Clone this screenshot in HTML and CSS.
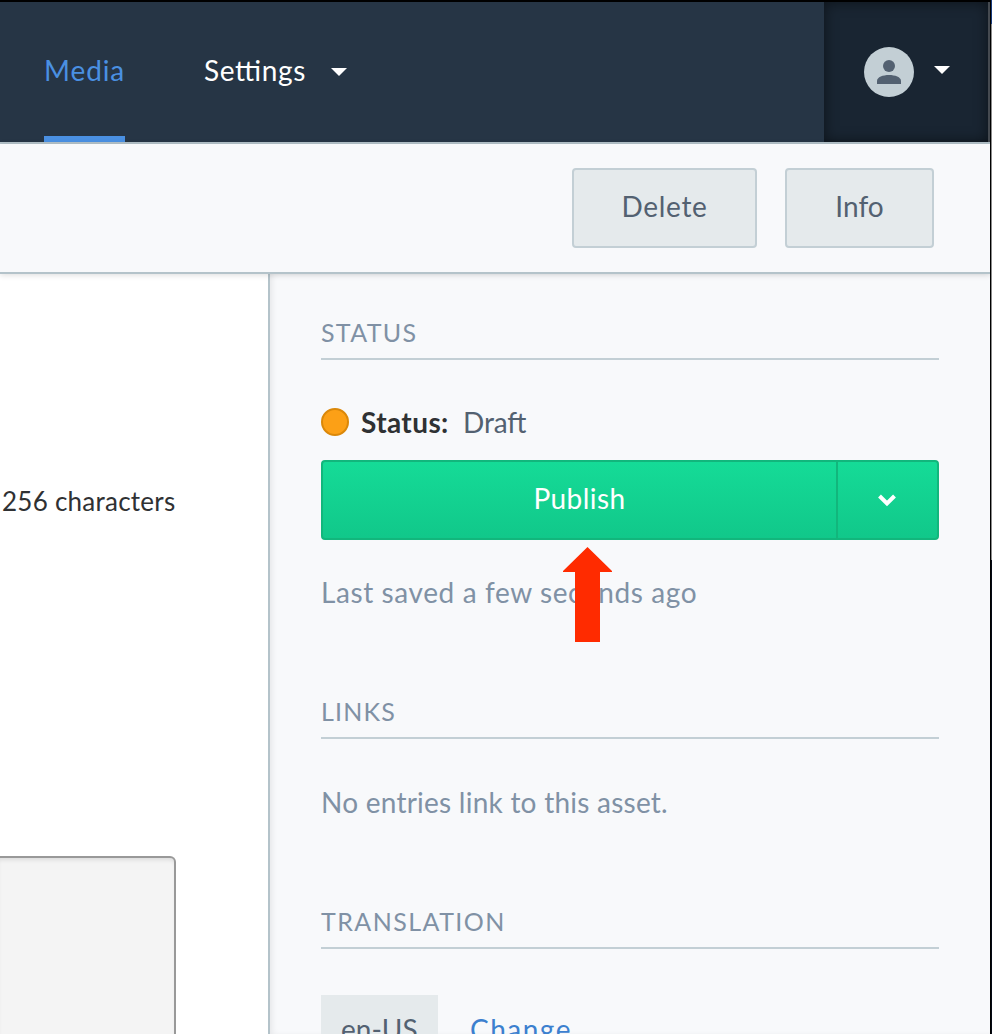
FILE: index.html
```html
<!DOCTYPE html>
<html lang="en">
<head>
<meta charset="utf-8">
<title>Media</title>
<link rel="stylesheet" href="styles.css">
</head>
<body>
<div class="window">
  <div class="app">
    <header class="nav">
      <nav class="tabs">
        <a class="tab active"><span class="t-media">Media</span></a>
        <a class="tab"><span class="t-settings">Settings</span><svg class="caret" width="16" height="8" viewBox="0 0 16 8"><path d="M0 0H16L8 8Z" fill="#fff"/></svg></a>
      </nav>
      <div class="account">
        <svg class="avatar" width="50" height="50" viewBox="0 0 50 50"><circle cx="25" cy="25" r="25" fill="#c3cfd5"/><circle cx="25" cy="19" r="6" fill="#536171"/><path d="M13 37V34C13 30 19 28 25 28S37 30 37 34V37Z" fill="#536171"/></svg>
        <svg class="caret" width="16" height="8" viewBox="0 0 16 8"><path d="M0 0H16L8 8Z" fill="#fff"/></svg>
      </div>
    </header>
    <div class="toolbar">
      <button class="btn delete"><span class="t-delete">Delete</span></button>
      <button class="btn info"><span class="t-info">Info</span></button>
    </div>
    <main class="body">
      <section class="editor">
        <p class="hint"><span class="t-hint">256 characters</span></p>
        <div class="field"></div>
      </section>
      <aside class="sidebar">
        <h2 class="heading"><span class="t-status">STATUS</span></h2>
        <div class="status"><i class="dot"></i><b class="t-label">Status:</b><span class="t-draft">Draft</span></div>
        <div class="publish">
          <button class="publish-main"><span class="t-publish">Publish</span></button>
          <button class="publish-more"><svg width="20" height="14" viewBox="0 0 20 14"><path d="M2.5 3L10 10.5L17.500 3" fill="none" stroke="#fff" stroke-width="4"/></svg></button>
          <svg class="pointer" width="49" height="96" viewBox="0 0 49 96"><path d="M24.500 0L49 24V25H37V95H12V25H0V24Z" fill="#ff2b00"/></svg>
        </div>
        <p class="note saved"><span class="t-saved">Last saved a few seconds ago</span></p>
        <h2 class="heading"><span class="t-links">LINKS</span></h2>
        <p class="note entries"><span class="t-entries">No entries link to this asset.</span></p>
        <h2 class="heading"><span class="t-translation">TRANSLATION</span></h2>
        <div class="locale"><span class="tag"><span class="t-locale">en-US</span></span><a class="change t-change">Change</a></div>
      </aside>
    </main>
  </div>
  <div class="edge"></div>
</div>
</body>
</html>
```
FILE: styles.css
```css
* { box-sizing: border-box; }
body { margin: 0; font: 28px/40px Lato, "Open Sans", sans-serif; color: #536171; font-feature-settings: "liga" 1; }
h2, p { margin: 0; font-weight: 400; }
button { margin: 0; padding: 0; font: inherit; color: inherit; }
span, b, a { white-space: nowrap; }
svg { display: block; flex: none; }
.window { display: flex; width: 992px; height: 1034px; overflow: hidden; background: #f8f9fb; }
.app { display: flex; flex-direction: column; width: 990px; height: 1034px; overflow: hidden; }
.edge { width: 2px; border-left: 1px solid #000; background: linear-gradient(#173a7c 24px, #8c8c8c 24px 560px, #050914 560px); }
.nav { display: flex; flex: none; height: 144px; border-top: 2px solid #000; border-bottom: 2px solid #b4c3ca; background: #263545; color: #fff; }
.tabs { display: flex; flex: 1; padding-left: 44px; gap: 79px; }
.tab { display: flex; align-items: center; padding-bottom: 4px; }
.tab .caret { margin: 4px 0 0 auto; }
.tab:last-child { width: 143px; }
.tab.active { width: 81px; padding-bottom: 0; padding-top: 2px; border-bottom: 6px solid #4a90e2; color: #4a90e2; }
.account { display: flex; align-items: flex-start; width: 166px; padding: 45px 0 0 40px; gap: 20px; background: #192532; border-right: 2px solid #454a50; box-shadow: inset 0 0 14px rgba(0,0,0,.5); }
.account .caret { margin-top: 19px; }
.toolbar { display: flex; flex: none; justify-content: flex-end; gap: 28px; height: 130px; padding: 24px 56px 0 0; border-bottom: 2px solid #b4c3ca; background: #f8f9fb; box-shadow: 0 1px 6px rgba(0,0,0,.14); position: relative; }
.btn { height: 80px; padding-bottom: 5px; border: 2px solid #c3cfd5; border-radius: 4px; background: #e5eaec; }
.btn.delete { width: 185px; }
.btn.info { width: 149px; }
.body { display: flex; flex: 1; min-height: 0; }
.editor { width: 268px; padding-top: 207px; background: #fff; color: #2f3133; }
.hint { padding-left: 2px; font-size: 26px; }
.field { width: 176px; height: 240px; margin: 335px 0 0 0; border: 2px solid #999; border-left: 0; border-radius: 0 6px 0 0; background: #f4f4f4; box-shadow: inset 0 4px 4px -2px rgba(0,0,0,.1); }
.sidebar { flex: 1; padding: 36px 51px 0; border-left: 2px solid #b4c3ca; background: #f8f9fb; box-shadow: inset 4px 0 6px -2px rgba(0,0,0,.08); }
.heading { height: 50px; padding-top: 2px; border-bottom: 2px solid #c3cfd5; font-size: 25px; color: #8091a5; }
.status { display: flex; align-items: center; height: 40px; margin-top: 42px; }
.dot { width: 28px; height: 28px; margin-right: 12px; border: 2px solid #db8809; border-radius: 50%; background: #fca016; }
.status b { width: 102px; color: #2f3133; }
.publish { display: flex; width: 618px; height: 80px; margin-top: 18px; border: 2px solid #12b67c; border-radius: 4px; background: linear-gradient(#15db97, #11c88a); color: #fff; position: relative; }
.publish button { border: 0; background: none; padding-bottom: 5px; }
.publish-main { width: 513px; }
.publish .publish-more { display: flex; align-items: center; justify-content: center; flex: 1; padding: 0 1px 1px 0; border-left: 2px solid #12b67c; }
.pointer { position: absolute; left: 240px; top: 85px; }
.note { height: 40px; color: #8091a5; }
.saved { margin: 32px 0 77px; }
.entries { margin: 43px 0 77px; }
.locale { display: flex; margin-top: 46px; }
.tag { width: 117px; height: 72px; padding: 14px 0 0 20px; background: #e5eaec; }
.change { margin-left: 32px; padding-top: 14px; color: #3c80cf; }
.t-media { letter-spacing: .9px; }
.t-settings { letter-spacing: .65px; }
.t-delete { letter-spacing: .7px; }
.t-hint { letter-spacing: .25px; }
.t-label { letter-spacing: .4px; }
.t-draft { letter-spacing: -.1px; }
.t-publish { letter-spacing: .45px; }
.t-saved { letter-spacing: .6px; }
.t-entries { letter-spacing: .24px; }
.t-status { letter-spacing: 1.3px; }
.t-links { letter-spacing: 1.2px; }
.t-translation { letter-spacing: 1.45px; }
.t-change { letter-spacing: 1.5px; }
```
